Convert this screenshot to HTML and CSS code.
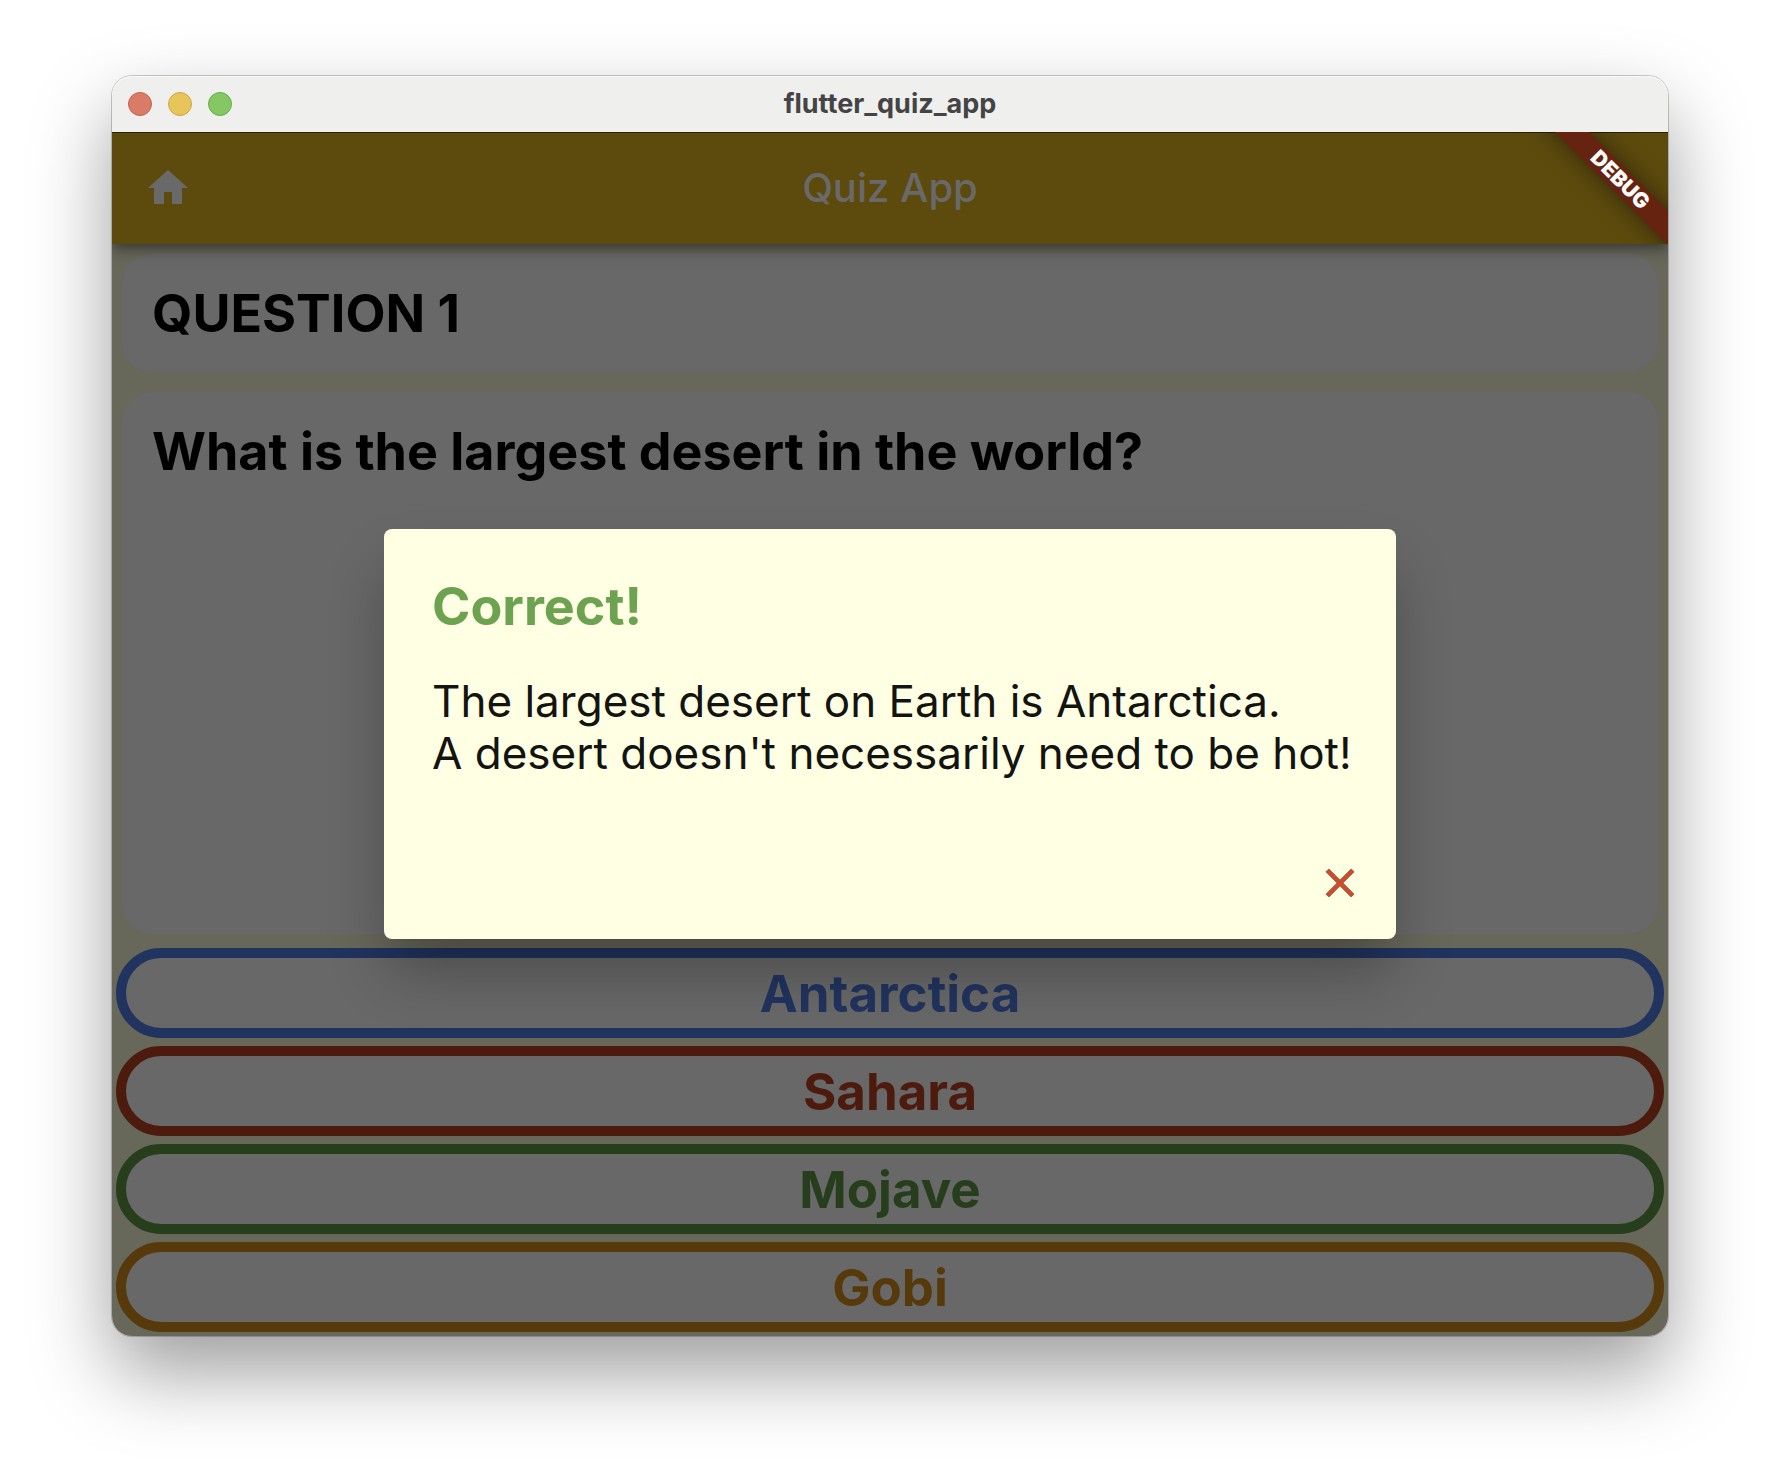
FILE: index.html
```html
<!DOCTYPE html>
<html lang="en">
<head>
<meta charset="utf-8">
<meta name="viewport" content="width=device-width, initial-scale=1">
<title>flutter_quiz_app</title>
<link rel="stylesheet" href="styles.css">
</head>
<body>
<div class="window">
  <header class="titlebar">
    <div class="lights">
      <button class="light light-close" type="button" aria-label="Close window"></button>
      <button class="light light-minimize" type="button" aria-label="Minimize window"></button>
      <button class="light light-zoom" type="button" aria-label="Zoom window"></button>
    </div>
    <span class="window-title">flutter_quiz_app</span>
  </header>

  <div class="app">
    <div class="appbar">
      <button class="icon-button" type="button" aria-label="Home">
        <svg class="icon" viewBox="0 0 24 24" aria-hidden="true"><path d="M10 20v-6h4v6h5v-8h3L12 3 2 12h3v8z"/></svg>
      </button>
      <h1 class="app-title">Quiz App</h1>
      <div class="ribbon-clip"><span class="ribbon">DEBUG</span></div>
    </div>

    <main class="quiz">
      <div class="cards">
        <section class="card"><h2 class="heading">QUESTION 1</h2></section>
        <section class="card card-question"><p class="heading">What is the largest desert in the world?</p></section>
      </div>
      <div class="answers">
        <button class="answer answer-blue" type="button">Antarctica</button>
        <button class="answer answer-red" type="button">Sahara</button>
        <button class="answer answer-green" type="button">Mojave</button>
        <button class="answer answer-orange" type="button">Gobi</button>
      </div>
    </main>

    <div class="overlay">
      <div class="dialog" role="dialog" aria-modal="true" aria-labelledby="result">
        <h2 class="heading result" id="result">Correct!</h2>
        <p class="explanation">The largest desert on Earth is Antarctica.<br>A desert doesn't necessarily need to be hot!</p>
        <button class="icon-button dismiss" type="button" aria-label="Dismiss">
          <svg class="icon" viewBox="0 0 24 24" aria-hidden="true"><path d="M19 6.41 17.59 5 12 10.59 6.41 5 5 6.41 10.59 12 5 17.59 6.41 19 12 13.41 17.59 19 19 17.59 13.41 12z"/></svg>
        </button>
      </div>
    </div>
  </div>
</div>
</body>
</html>
```
FILE: styles.css
```css
* {
  box-sizing: border-box;
}

body {
  display: flex;
  min-height: 100vh;
  margin: 0;
  padding: 76px 112px 148px;
  background: #fff;
  font-family: Inter, "Liberation Sans", sans-serif;
}

h1, h2, p {
  margin: 0;
}

button {
  padding: 0;
  border: 0;
  font: inherit;
  cursor: pointer;
}

.window {
  flex: 1;
  display: flex;
  flex-direction: column;
  border-radius: 20px;
  box-shadow: 0 0 0 1px rgba(0, 0, 0, 0.2), 0 36px 80px rgba(0, 0, 0, 0.39);
}

.titlebar {
  display: grid;
  grid-template-columns: 1fr auto 1fr;
  align-items: center;
  height: 56px;
  padding: 0 16px;
  border-radius: 20px 20px 0 0;
  background: #efefed;
  box-shadow: inset 0 1px 1px #f9f9f8;
}

.lights {
  display: flex;
  gap: 16px;
}

.light {
  width: 24px;
  height: 24px;
  border: 1px solid;
  border-radius: 50%;
}

.light-close {
  border-color: #c9614d;
  background: #d97b67;
}

.light-minimize {
  border-color: #cfa544;
  background: #e8c55b;
}

.light-zoom {
  border-color: #69ab4b;
  background: #84c763;
}

.window-title {
  color: #444;
  font-size: 27px;
  font-weight: 700;
  line-height: 32px;
}

.app {
  position: relative;
  flex: 1;
  display: flex;
  flex-direction: column;
  overflow: hidden;
  border-radius: 0 0 20px 20px;
  background: #67675a;
}

.appbar {
  position: relative;
  z-index: 1;
  display: grid;
  grid-template-columns: 1fr auto 1fr;
  align-items: center;
  height: 112px;
  padding: 0 32px;
  background: #5d4b0e;
  box-shadow: inset 0 1px #2e1e00, 0 4px 14px rgba(0, 0, 0, 0.5);
}

.icon-button {
  width: 48px;
  height: 48px;
  background: none;
  color: #696969;
}

.icon {
  display: block;
  width: 48px;
  height: 48px;
  fill: currentColor;
}

.app-title {
  color: #696969;
  font-size: 40px;
  font-weight: 500;
  line-height: 48px;
}

.ribbon-clip {
  position: absolute;
  inset: 0;
  overflow: hidden;
  pointer-events: none;
}

.ribbon {
  position: absolute;
  top: 36px;
  right: -52px;
  width: 200px;
  background: #66230f;
  box-shadow: 0 0 24px rgba(0, 0, 0, 0.5);
  color: #fff;
  font-size: 21px;
  font-weight: 900;
  line-height: 24px;
  text-align: center;
  transform: rotate(45deg);
}

.quiz {
  position: relative;
  z-index: 0;
  flex: 1;
  display: flex;
  flex-direction: column;
  gap: 14px;
  padding: 10px 4px 4px;
}

.cards {
  flex: 1;
  display: flex;
  flex-direction: column;
  gap: 20px;
  padding: 0 6px;
}

.card {
  padding: 30px 30px 28px;
  border-radius: 30px;
  background: #686868;
}

.card-question {
  flex: 1;
}

.heading {
  color: #000;
  font-size: 52px;
  font-weight: 700;
  line-height: 60px;
}

.answers {
  display: flex;
  flex-direction: column;
  gap: 8px;
}

.answer {
  height: 90px;
  padding-top: 2px;
  border: 10px solid;
  border-radius: 45px;
  background: #686868;
  font-size: 51px;
  font-weight: 700;
  line-height: 60px;
}

.answer-blue {
  border-color: #21345f;
  color: #21345f;
}

.answer-red {
  border-color: #4d1a0e;
  color: #4d1a0e;
}

.answer-green {
  border-color: #273e1c;
  color: #273e1c;
}

.answer-orange {
  border-color: #573a0b;
  color: #573a0b;
}

.overlay {
  position: absolute;
  inset: 0;
  z-index: 2;
  display: flex;
  align-items: center;
  justify-content: center;
}

.dialog {
  display: flex;
  flex-direction: column;
  width: 1012px;
  max-width: 90%;
  min-height: 410px;
  padding: 48px 32px 32px 48px;
  border-radius: 8px;
  background: #ffffe3;
  box-shadow: 0 36px 60px -6px rgba(0, 0, 0, 0.3);
}

.result {
  color: #6ca250;
}

.explanation {
  margin: 38px 0 80px;
  color: #13130f;
  font-size: 44px;
  line-height: 52px;
}

.dismiss {
  margin-top: auto;
  margin-left: auto;
  color: #c44e31;
}

.dismiss .icon {
  stroke: currentColor;
  stroke-width: 0.5;
}
```
